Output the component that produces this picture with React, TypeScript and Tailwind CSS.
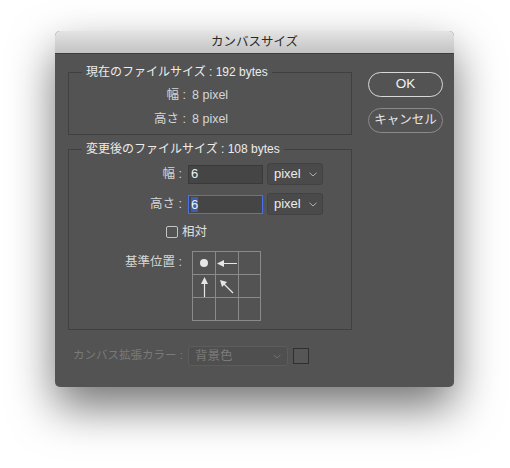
import React from 'react';

const font = { fontFamily: '"Liberation Sans", "Noto Sans CJK JP", sans-serif' };

const Chevron = ({ color = '#b0b0b0' }: { color?: string }) => (
  <svg width="8" height="5" viewBox="0 0 8 5" fill="none">
    <path d="M0.5 0.8 L4 4 L7.5 0.8" stroke={color} strokeWidth="1" />
  </svg>
);

const Select = ({ value }: { value: string }) => (
  <div className="flex h-[22px] w-[56px] items-center justify-between rounded-[3px] border border-[#424242] bg-[#4a4a4a] pl-[6px] pr-[5px] text-[13px] text-[#ececec]">
    <span>{value}</span>
    <Chevron />
  </div>
);

// anchor grid cell content
const Cell = ({ children }: { children?: React.ReactNode }) => (
  <div className="flex h-[23px] w-[23px] items-center justify-center border-r border-b border-[#8a8a8a]">
    {children}
  </div>
);

const AnchorGrid = () => (
  <div className="grid w-[69px] grid-cols-3 border-l border-t border-[#8a8a8a]">
    <Cell>
      <div className="h-[8px] w-[8px] rounded-full bg-[#e6e6e6]" />
    </Cell>
    <Cell>
      <svg width="21" height="9" viewBox="0 0 21 9">
        <path d="M1 4.5 L8 1 L8 8 Z" fill="#e6e6e6" />
        <path d="M7 4.5 H21" stroke="#e6e6e6" strokeWidth="1.2" />
      </svg>
    </Cell>
    <Cell />
    <Cell>
      <svg width="9" height="21" viewBox="0 0 9 21">
        <path d="M4.5 1 L8 8 L1 8 Z" fill="#e6e6e6" />
        <path d="M4.5 7 V21" stroke="#e6e6e6" strokeWidth="1.2" />
      </svg>
    </Cell>
    <Cell>
      <svg width="15" height="15" viewBox="0 0 15 15">
        <path d="M1 1 L8 3 L3 8 Z" fill="#e6e6e6" />
        <path d="M4.5 4.5 L14 14" stroke="#e6e6e6" strokeWidth="1.3" />
      </svg>
    </Cell>
    <Cell />
    <Cell />
    <Cell />
    <Cell />
  </div>
);

export default function App() {
  return (
    <div className="min-h-[468px] bg-white pl-[55px] pt-[31px]" style={font}>
      <div className="h-[356px] w-[399px] overflow-hidden rounded-[5px] bg-[#535353] shadow-[0_20px_45px_rgba(0,0,0,0.55)]">
        {/* title bar */}
        <div className="flex h-[23px] items-center justify-center border-b border-[#3c3c3c] bg-gradient-to-b from-[#e4e4e4] to-[#c3c3c3] text-[12.5px] text-[#2a2a2a]">
          カンバスサイズ
        </div>

        <div className="flex pl-[13px]">
          <div className="w-[284px]">
            {/* current size */}
            <div className="relative mt-[18px] h-[63px] border border-[#404040] pt-[10px]">
              <span className="absolute left-[13px] top-[-10px] whitespace-nowrap bg-[#535353] px-[4px] text-[12px] leading-[18px] text-[#ececec]">
                現在のファイルサイズ : 192 bytes
              </span>
              <div className="grid grid-cols-[117px_1fr] gap-x-[6px] text-[12.5px] leading-[24px] text-[#d6d6d6]">
                <span className="text-right">幅 :</span>
                <span>8 pixel</span>
                <span className="text-right">高さ :</span>
                <span>8 pixel</span>
              </div>
            </div>

            {/* new size */}
            <div className="relative mt-[14px] h-[181px] border border-[#404040] pt-[13px]">
              <span className="absolute left-[13px] top-[-10px] whitespace-nowrap bg-[#535353] px-[4px] text-[12px] leading-[18px] text-[#ececec]">
                変更後のファイルサイズ : 108 bytes
              </span>

              <div className="flex h-[22px] items-center">
                <span className="w-[113px] text-right text-[12.5px] text-[#d6d6d6]">幅 :</span>
                <div className="ml-[6px] flex h-[19px] w-[75px] items-center border border-[#3a3a3a] bg-[#454545] pl-[2px] text-[13px] text-[#f2f2f2]">
                  6
                </div>
                <div className="ml-[4px]">
                  <Select value="pixel" />
                </div>
              </div>

              <div className="mt-[8px] flex h-[22px] items-center">
                <span className="w-[113px] text-right text-[12.5px] text-[#d6d6d6]">高さ :</span>
                <div className="ml-[6px] flex h-[19px] w-[75px] items-center border border-[#4a72e8] bg-[#454545] pl-[2px] text-[13px] leading-[15px] text-[#f2f2f2]">
                  <span className="bg-[#3d5ea8]">6</span>
                </div>
                <div className="ml-[4px]">
                  <Select value="pixel" />
                </div>
              </div>

              <div className="mt-[6px] flex h-[22px] items-center pl-[97px]">
                <div className="h-[12px] w-[12px] rounded-[2px] border border-[#c4c4c4]" />
                <span className="ml-[4px] text-[12.5px] text-[#e0e0e0]">相対</span>
              </div>

              <div className="mt-[8px] flex items-start">
                <span className="w-[113px] text-right text-[12.5px] leading-[22px] text-[#d6d6d6]">基準位置 :</span>
                <div className="ml-[10px]">
                  <AnchorGrid />
                </div>
              </div>
            </div>

            {/* extension colour (disabled) */}
            <div className="mt-[16px] flex h-[20px] items-center">
              <div className="flex w-[115px] justify-end">
                <span className="shrink-0 whitespace-nowrap text-[11.5px] text-[#7a7a7a]">カンバス拡張カラー :</span>
              </div>
              <div className="ml-[5px] flex h-[20px] w-[100px] items-center justify-between rounded-[3px] border border-[#5c5c5c] bg-[#4f4f4f] pl-[6px] pr-[6px] text-[12.5px] text-[#7a7a7a]">
                <span>背景色</span>
                <Chevron color="#707070" />
              </div>
              <div className="ml-[5px] h-[16px] w-[16px] border border-[#2f2f2f] bg-[#565656]" />
            </div>
          </div>

          {/* buttons */}
          <div className="ml-[16px] mt-[18px] flex flex-col gap-[11px]">
            <button className="h-[25px] w-[75px] rounded-full border border-[#d8d8d8] text-[13.5px] text-[#f2f2f2]">
              OK
            </button>
            <button className="h-[25px] w-[75px] rounded-full border border-[#8a8a8a] text-[12.5px] text-[#e6e6e6]">
              キャンセル
            </button>
          </div>
        </div>
      </div>
    </div>
  );
}
